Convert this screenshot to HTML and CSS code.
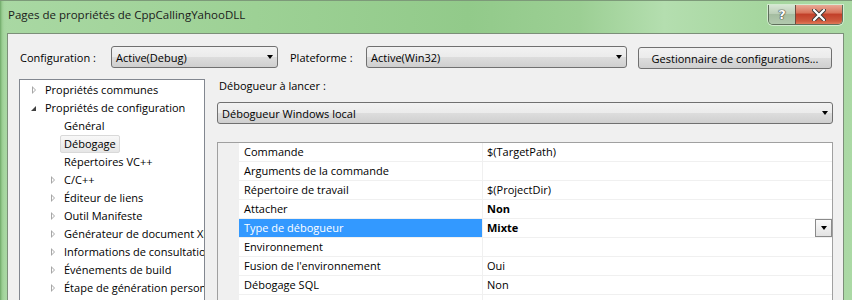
FILE: index.html
```html
<!DOCTYPE html>
<html lang="fr">
<head>
<meta charset="utf-8">
<title>Pages de propriétés</title>
<link rel="stylesheet" href="styles.css">
</head>
<body>
<div class="window">
  <div class="titlebar">
    <span class="title">Pages de propriétés de CppCallingYahooDLL</span>
    <div class="caption-btns">
      <div class="cbtn help"><span class="help-glyph">?</span></div>
      <div class="cbtn close">
        <svg width="14" height="12" viewBox="0 0 14 12"><path d="M2 1 L12 11 M12 1 L2 11" stroke="#3a3a3a" stroke-width="4" stroke-linecap="round" fill="none"/><path d="M2 1 L12 11 M12 1 L2 11" stroke="#ffffff" stroke-width="2.2" stroke-linecap="round" fill="none"/></svg>
      </div>
    </div>
  </div>
  <div class="client">
    <div class="config-row">
      <span class="lbl lbl-config">Configuration :</span>
      <div class="combo combo-config"><span>Active(Debug)</span><i class="arrow"></i></div>
      <span class="lbl lbl-plat">Plateforme :</span>
      <div class="combo combo-plat"><span>Active(Win32)</span><i class="arrow"></i></div>
      <div class="btn">Gestionnaire de configurations...</div>
    </div>
    <div class="main">
      <div class="tree">
        <div class="item l1"><span class="exp collapsed"></span><span class="txt">Propriétés communes</span></div>
        <div class="item l1"><span class="exp expanded"></span><span class="txt">Propriétés de configuration</span></div>
        <div class="item l2"><span class="exp"></span><span class="txt">Général</span></div>
        <div class="item l2"><span class="exp"></span><span class="txt sel">Débogage</span></div>
        <div class="item l2"><span class="exp"></span><span class="txt">Répertoires VC++</span></div>
        <div class="item l2"><span class="exp collapsed"></span><span class="txt">C/C++</span></div>
        <div class="item l2"><span class="exp collapsed"></span><span class="txt">Éditeur de liens</span></div>
        <div class="item l2"><span class="exp collapsed"></span><span class="txt">Outil Manifeste</span></div>
        <div class="item l2"><span class="exp collapsed"></span><span class="txt">Générateur de document XML</span></div>
        <div class="item l2"><span class="exp collapsed"></span><span class="txt">Informations de consultation</span></div>
        <div class="item l2"><span class="exp collapsed"></span><span class="txt">Événements de build</span></div>
        <div class="item l2"><span class="exp collapsed"></span><span class="txt">Étape de génération personnalisée</span></div>
      </div>
      <div class="panel">
        <div class="panel-label">Débogueur à lancer :</div>
        <div class="combo combo-full"><span>Débogueur Windows local</span><i class="arrow"></i></div>
        <div class="grid">
          <div class="row"><div class="gut"></div><div class="name">Commande</div><div class="val">$(TargetPath)</div></div>
          <div class="row"><div class="gut"></div><div class="name">Arguments de la commande</div><div class="val"></div></div>
          <div class="row"><div class="gut"></div><div class="name">Répertoire de travail</div><div class="val">$(ProjectDir)</div></div>
          <div class="row"><div class="gut"></div><div class="name">Attacher</div><div class="val bold">Non</div></div>
          <div class="row"><div class="gut"></div><div class="name selected">Type de débogueur</div><div class="val bold">Mixte<span class="dd"><i class="arrow"></i></span></div></div>
          <div class="row"><div class="gut"></div><div class="name">Environnement</div><div class="val"></div></div>
          <div class="row"><div class="gut"></div><div class="name">Fusion de l'environnement</div><div class="val">Oui</div></div>
          <div class="row"><div class="gut"></div><div class="name">Débogage SQL</div><div class="val">Non</div></div>
          <div class="row"><div class="gut"></div><div class="name"></div><div class="val"></div></div>
        </div>
      </div>
    </div>
  </div>
</div>
</body>
</html>
```
FILE: styles.css
```css
* { box-sizing: border-box; }
html, body { margin: 0; padding: 0; }
body {
  width: 852px;
  height: 300px;
  overflow: hidden;
  font-family: "Open Sans", "Noto Sans", "Liberation Sans", sans-serif;
  font-size: 11px;
  color: #000;
}
.window {
  width: 852px;
  height: 300px;
  display: flex;
  flex-direction: column;
  background:
    linear-gradient(to right, #6fa868 0px, #98cc90 2px, #a6d6a0 4px, transparent 7px),
    linear-gradient(to right, #a9d8a3 0%, #9dd195 30%, #92ca8a 55%, #9ccf94 68%, #b4deaf 78%, #a5d69e 90%, #abd9a5 100%);
  border-top: 1px solid #7d9a79;
}
.titlebar {
  height: 32px;
  display: flex;
  align-items: flex-start;
  justify-content: space-between;
  flex-shrink: 0;
}
.title {
  margin-left: 8px;
  margin-top: 6px;
  font-size: 11.5px;
  line-height: 15px;
  color: #1a1a1a;
}
.caption-btns {
  display: flex;
  margin-top: 4px;
  margin-right: 9px;
  border: 1px solid #5f6f5c;
  border-top: none;
  border-radius: 0 0 5px 5px;
  overflow: hidden;
  box-shadow: 0 0 0 1px rgba(255,255,255,0.5);
}
.cbtn {
  height: 19px;
  display: flex;
  align-items: center;
  justify-content: center;
}
.help {
  width: 27px;
  background: linear-gradient(to bottom, #d7e6d4 0%, #bccfb8 45%, #a5bda1 50%, #b2c9ae 100%);
  border-right: 1px solid #6e4a3e;
}
.help-glyph {
  font-family: "DejaVu Sans", sans-serif;
  font-weight: bold;
  font-size: 13px;
  color: #fff;
  text-shadow: 0 0 1px #333, 0 0 1px #333, 0 0 1px #333;
  line-height: 13px;
}
.close {
  width: 46px;
  background: linear-gradient(to bottom, #e9a996 0%, #d9755c 40%, #c2402a 50%, #cf5a3e 85%, #e07a5a 100%);
}
.client {
  flex: 1;
  margin-left: 7px;
  margin-right: 8px;
  background: #f0f0f0;
  border: 1px solid #7c8f79;
  border-bottom: none;
  display: flex;
  flex-direction: column;
  min-height: 0;
  overflow: hidden;
}
.config-row {
  display: flex;
  align-items: center;
  padding: 12px 0 0 12px;
  height: 34px;
  flex-shrink: 0;
}
.lbl { white-space: nowrap; }
.lbl-config { width: 91px; }
.lbl-plat { width: 76px; margin-left: 12px; }
.combo {
  position: relative;
  height: 22px;
  flex-shrink: 0;
  border: 1px solid #707070;
  border-radius: 3px;
  background: linear-gradient(to bottom, #f2f2f2 0%, #ebebeb 50%, #dddddd 50%, #cfcfcf 100%);
  display: flex;
  align-items: center;
  padding-left: 4px;
  white-space: nowrap;
}
.combo-config { width: 167px; }
.combo-plat { width: 261px; }
.combo-full { width: 100%; margin-top: 9px; }
.arrow {
  display: block;
  width: 0;
  height: 0;
  border-left: 3.5px solid transparent;
  border-right: 3.5px solid transparent;
  border-top: 4px solid #000;
}
.combo .arrow {
  position: absolute;
  right: 4px;
  top: 8px;
}
.btn {
  width: 194px;
  height: 22px;
  flex-shrink: 0;
  margin-left: 11px;
  margin-top: 2px;
  border: 1px solid #707070;
  border-radius: 3px;
  background: linear-gradient(to bottom, #f2f2f2 0%, #ebebeb 50%, #dddddd 50%, #cfcfcf 100%);
  display: flex;
  align-items: center;
  justify-content: center;
  white-space: nowrap;
}
.main {
  display: flex;
  align-items: flex-start;
  padding: 11px 10px 0 11px;
  gap: 12px;
}
.tree {
  width: 186px;
  height: 240px;
  flex-shrink: 0;
  background: #fff;
  border: 1px solid #828790;
  border-bottom: none;
  padding-top: 1px;
  overflow: hidden;
}
.item {
  display: flex;
  align-items: center;
  height: 18px;
  white-space: nowrap;
}
.item.l1 { padding-left: 5px; }
.item.l2 { padding-left: 24px; }
.exp {
  width: 16px;
  height: 18px;
  flex-shrink: 0;
  position: relative;
}
.exp.collapsed::before {
  content: "";
  position: absolute;
  left: 7px;
  top: 5px;
  width: 0;
  height: 0;
  border-top: 4px solid transparent;
  border-bottom: 4px solid transparent;
  border-left: 4px solid #a6a6a6;
}
.exp.collapsed::after {
  content: "";
  position: absolute;
  left: 8px;
  top: 7px;
  width: 0;
  height: 0;
  border-top: 2px solid transparent;
  border-bottom: 2px solid transparent;
  border-left: 2px solid #fff;
}
.exp.expanded::before {
  content: "";
  position: absolute;
  left: 6px;
  top: 7px;
  width: 0;
  height: 0;
  border-left: 5px solid transparent;
  border-bottom: 5px solid #404040;
}
.txt {
  padding: 0 3px;
  border: 1px solid transparent;
  border-radius: 2px;
  line-height: 16px;
}
.txt.sel {
  border-color: #d9d9d9;
  background: linear-gradient(to bottom, #f8f8f8, #e6e6e6);
}
.panel {
  flex: 1;
  display: flex;
  flex-direction: column;
  min-width: 0;
}
.panel-label {
  line-height: 14px;
  height: 14px;
  padding-left: 2px;
  flex-shrink: 0;
}
.grid {
  margin-top: 18px;
  flex-shrink: 0;
  height: 200px;
  background: #fff;
  border: 1px solid #a0a0a0;
  border-bottom: none;
}
.row {
  display: flex;
  height: 19px;
}
.gut {
  width: 21px;
  background: #f0f0f0;
  flex-shrink: 0;
}
.name {
  width: 244px;
  flex-shrink: 0;
  padding-left: 5px;
  border-right: 1px solid #f0f0f0;
  border-bottom: 1px solid #f0f0f0;
  line-height: 18px;
  white-space: nowrap;
}
.name.selected {
  background: #3399ff;
  color: #fff;
}
.val {
  flex: 1;
  position: relative;
  padding-left: 4px;
  border-bottom: 1px solid #f0f0f0;
  line-height: 18px;
  white-space: nowrap;
}
.val.bold { font-weight: bold; }
.dd {
  position: absolute;
  right: 0;
  top: 0;
  width: 17px;
  height: 18px;
  border: 1px solid #8a8a8a;
  background: linear-gradient(to bottom, #fafafa, #e2e2e2);
  display: flex;
  align-items: center;
  justify-content: center;
}
```
